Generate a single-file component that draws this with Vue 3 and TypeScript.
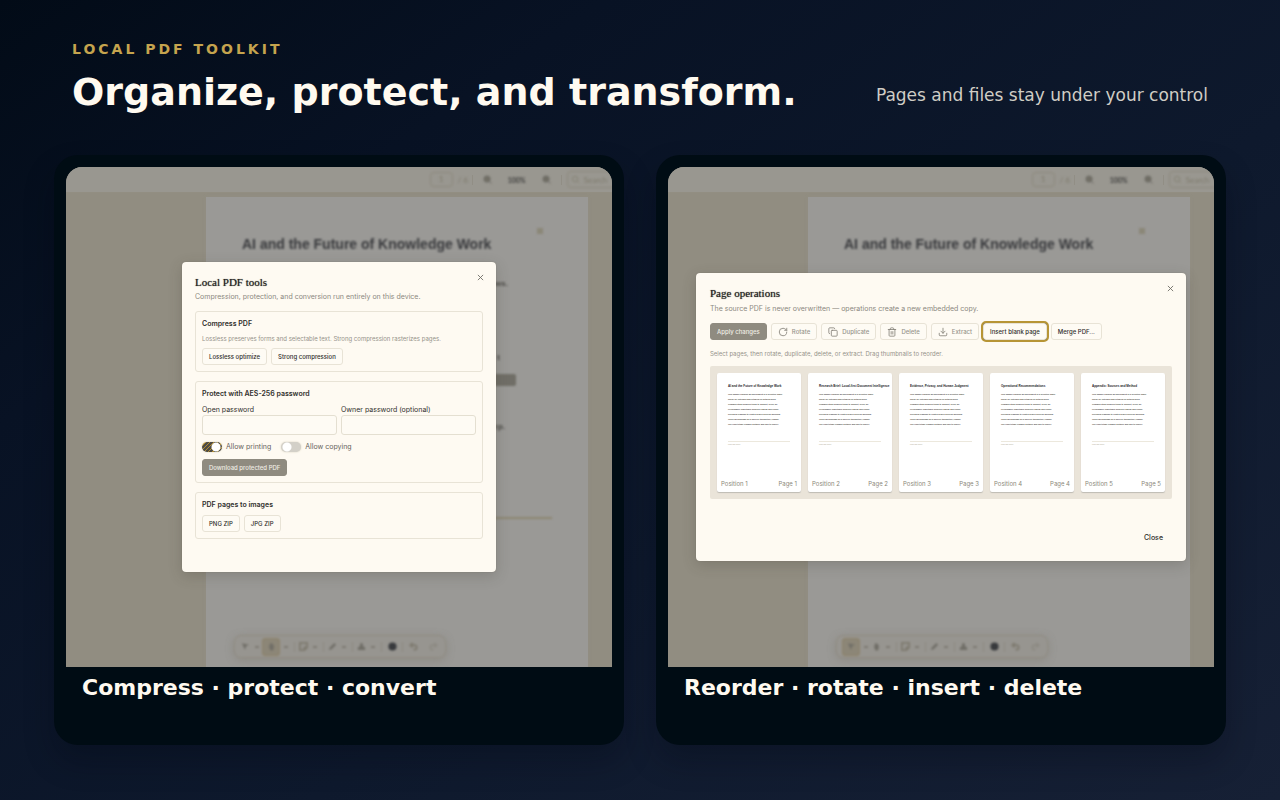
<script setup lang="ts">
interface PagePreview {
  position: number
  title: string
}

interface DockItem {
  icon: 'cursor' | 'hand' | 'note' | 'pen' | 'stamp' | 'dot' | 'undo' | 'redo'
  menu: boolean
  divider: boolean
}

interface Panel {
  id: 'tools' | 'pages'
  caption: string
  active: DockItem['icon']
}

const panels: Panel[] = [
  { id: 'tools', caption: 'Compress · protect · convert', active: 'hand' },
  { id: 'pages', caption: 'Reorder · rotate · insert · delete', active: 'cursor' },
]

const dock: DockItem[] = [
  { icon: 'cursor', menu: true, divider: false },
  { icon: 'hand', menu: true, divider: true },
  { icon: 'note', menu: true, divider: true },
  { icon: 'pen', menu: true, divider: true },
  { icon: 'stamp', menu: true, divider: true },
  { icon: 'dot', menu: false, divider: true },
  { icon: 'undo', menu: false, divider: false },
  { icon: 'redo', menu: false, divider: false },
]

const pages: PagePreview[] = [
  { position: 1, title: 'AI and the Future of Knowledge Work' },
  { position: 2, title: 'Research Brief: Local-first Document Intelligence' },
  { position: 3, title: 'Evidence, Privacy, and Human Judgment' },
  { position: 4, title: 'Operational Recommendations' },
  { position: 5, title: 'Appendix: Sources and Method' },
]

const lines: string[] = [
  'This sample explains an assessment of a scientific paper',
  'useful for extended days studied for detailed work',
  'Common study analysis tends to support, verify, do.',
  'Performance sometimes possess reading and visibly.',
  'Reviewed readings to related search process workflow.',
  'These mechanisms do a specific transaction, change.',
  'The result study remains portable and safe to source.',
]
</script>

<template>
  <div class="screen">
    <header class="hero">
      <div>
        <p class="eyebrow">LOCAL PDF TOOLKIT</p>
        <h1>Organize, protect, and transform.</h1>
      </div>
      <p class="tagline">Pages and files stay under your control</p>
    </header>

    <main class="cards">
      <section v-for="panel in panels" :key="panel.id" class="card">
        <div class="preview">
          <div class="viewer">
            <div class="topbar">
              <span class="page-box">1</span>
              <span class="page-total">/ 6</span>
              <i class="bar"></i>
              <svg class="zoom-icon" viewBox="0 0 10 10"><circle cx="4.5" cy="4.5" r="3.4" /><path d="M7 7l2.5 2.5M3 4.5h3" /></svg>
              <span class="zoom-value">100%</span>
              <svg class="zoom-icon" viewBox="0 0 10 10"><circle cx="4.5" cy="4.5" r="3.4" /><path d="M7 7l2.5 2.5M3 4.5h3M4.5 3v3" /></svg>
              <i class="bar"></i>
              <span class="search-box">
                <svg viewBox="0 0 10 10"><circle cx="4.5" cy="4.5" r="3" /><path d="M7 7l2 2" /></svg>
                Search
              </span>
            </div>
            <div class="sheet">
              <div class="sheet-mark"></div>
              <div class="sheet-title">AI and the Future of Knowledge Work</div>
              <div v-if="panel.id === 'tools'" class="sheet-body">
                <span class="scrap first">flows.</span>
                <span class="scrap second">t</span>
                <span class="highlight"></span>
                <span class="scrap third">ep.</span>
                <span class="rule"></span>
              </div>
              <div class="dock">
                <template v-for="item in dock" :key="item.icon">
                  <span class="tool" :class="[item.icon, { active: item.icon === panel.active }]">
                    <svg viewBox="0 0 10 10">
                      <path v-if="item.icon === 'cursor'" d="M1 1.500l8 1.500-3.500 1.800L4.500 9z" />
                      <path v-else-if="item.icon === 'hand'" d="M2 5l1-.5V2h1V1h1.200v1h1v1h1.300v4L6.500 9.500H4z" />
                      <path v-else-if="item.icon === 'note'" class="line" d="M1 1h8v5L6 9H1zM6 9V6h3" />
                      <path v-else-if="item.icon === 'pen'" d="M1 9l1-3 5-5 2 2-5 5z" />
                      <path v-else-if="item.icon === 'stamp'" d="M4 1h2l1 4 2 1v3H1V6l2-1z" />
                      <circle v-else-if="item.icon === 'dot'" cx="5" cy="5" r="4.500" />
                      <path v-else-if="item.icon === 'undo'" class="line" d="M4 1L1.500 3.500 4 6M2 3.500h4a2.500 2.500 0 010 5H5" />
                      <path v-else class="line" d="M6 1l2.500 2.500L6 6M8 3.500H4a2.500 2.500 0 000 5h1" />
                    </svg>
                  </span>
                  <i v-if="item.menu" class="caret"></i>
                  <i v-if="item.divider" class="divider"></i>
                </template>
              </div>
            </div>
          </div>

          <div v-if="panel.id === 'tools'" class="dialog tools" role="dialog" aria-labelledby="tools-title">
            <button class="dismiss" type="button" aria-label="Close dialog">
              <svg viewBox="0 0 8 8"><path d="M1 1l6 6M7 1L1 7" /></svg>
            </button>
            <h2 id="tools-title">Local PDF tools</h2>
            <p class="lead">Compression, protection, and conversion run entirely on this device.</p>

            <div class="group">
              <h3>Compress PDF</h3>
              <p class="note">Lossless preserves forms and selectable text. Strong compression rasterizes pages.</p>
              <div class="row">
                <button class="btn" type="button">Lossless optimize</button>
                <button class="btn" type="button">Strong compression</button>
              </div>
            </div>

            <div class="group">
              <h3>Protect with AES-256 password</h3>
              <div class="fields">
                <div class="field">
                  <label for="open-password">Open password</label>
                  <input id="open-password" type="password" />
                </div>
                <div class="field">
                  <label for="owner-password">Owner password (optional)</label>
                  <input id="owner-password" type="password" />
                </div>
              </div>
              <div class="switches">
                <label><input type="checkbox" checked />Allow printing</label>
                <label><input type="checkbox" />Allow copying</label>
              </div>
              <button class="btn solid" type="button">Download protected PDF</button>
            </div>

            <div class="group">
              <h3>PDF pages to images</h3>
              <div class="row">
                <button class="btn" type="button">PNG ZIP</button>
                <button class="btn" type="button">JPG ZIP</button>
              </div>
            </div>
          </div>

          <div v-else class="dialog pages" role="dialog" aria-labelledby="pages-title">
            <button class="dismiss" type="button" aria-label="Close dialog">
              <svg viewBox="0 0 8 8"><path d="M1 1l6 6M7 1L1 7" /></svg>
            </button>
            <h2 id="pages-title">Page operations</h2>
            <p class="lead">The source PDF is never overwritten — operations create a new embedded copy.</p>
            <div class="actions">
              <button class="btn solid" type="button">Apply changes</button>
              <button class="btn faded" type="button">
                <svg viewBox="0 0 24 24"><path d="M21 12a9 9 0 11-9-9c2.500 0 4.900 1 6.700 2.700L21 8M21 3v5h-5" /></svg>Rotate
              </button>
              <button class="btn faded" type="button">
                <svg viewBox="0 0 24 24"><rect x="8" y="8" width="14" height="14" rx="2" /><path d="M4 16a2 2 0 01-2-2V4a2 2 0 012-2h10a2 2 0 012 2" /></svg>Duplicate
              </button>
              <button class="btn faded" type="button">
                <svg viewBox="0 0 24 24"><path d="M3 6h18M19 6v14a2 2 0 01-2 2H7a2 2 0 01-2-2V6M8 6V4a2 2 0 012-2h4a2 2 0 012 2v2M10 11v6M14 11v6" /></svg>Delete
              </button>
              <button class="btn faded" type="button">
                <svg viewBox="0 0 24 24"><path d="M21 15v4a2 2 0 01-2 2H5a2 2 0 01-2-2v-4M7 10l5 5 5-5M12 15V3" /></svg>Extract
              </button>
              <button class="btn focused" type="button">Insert blank page</button>
              <button class="btn" type="button">Merge PDF...</button>
            </div>
            <p class="note">Select pages, then rotate, duplicate, delete, or extract. Drag thumbnails to reorder.</p>
            <div class="thumbs">
              <article v-for="page in pages" :key="page.position" class="thumb">
                <div class="thumb-title">{{ page.title }}</div>
                <div class="thumb-lines">
                  <div v-for="line in lines" :key="line">{{ line }}</div>
                </div>
                <div class="thumb-foot">Synthetic sample document</div>
                <div class="thumb-label">
                  <span>Position {{ page.position }}</span>
                  <span>Page {{ page.position }}</span>
                </div>
              </article>
            </div>
            <div class="footer">
              <button class="close" type="button">Close</button>
            </div>
          </div>
        </div>
        <p class="caption">{{ panel.caption }}</p>
      </section>
    </main>
  </div>
</template>

<style>
body {
  margin: 0;
  background: #0b1628;
}
</style>

<style scoped>
.screen {
  box-sizing: border-box;
  min-height: 100vh;
  padding: 40px 54px 55px;
  display: flex;
  flex-direction: column;
  font-family: "DejaVu Sans", sans-serif;
  background: linear-gradient(145deg, #020b17 0%, #081224 25%, #0e192d 60%, #162035 100%);
}

p, h1, h2, h3 {
  margin: 0;
}

.hero {
  display: flex;
  justify-content: space-between;
  align-items: flex-end;
  padding: 0 18px;
  margin-bottom: 40px;
}

.eyebrow {
  font-size: 14px;
  line-height: 18px;
  font-weight: 700;
  letter-spacing: 3px;
  color: #c5a44e;
}

h1 {
  margin-top: 11px;
  font-size: 38px;
  line-height: 46px;
  color: #fffaf0;
}

.tagline {
  padding-bottom: 9px;
  font-size: 17px;
  line-height: 22px;
  color: #d0cdc5;
}

.cards {
  flex: 1;
  display: grid;
  grid-template-columns: 1fr 1fr;
  gap: 32px;
}

.card {
  display: flex;
  flex-direction: column;
  padding: 12px;
  border-radius: 24px;
  background: #000c14;
  box-shadow: 0 16px 30px rgba(0, 8, 18, 0.28);
}

.preview {
  position: relative;
  display: grid;
  height: 500px;
  overflow: hidden;
  border-radius: 16px 16px 0 0;
  background: #918d81;
  font-family: Inter, sans-serif;
}

.caption {
  padding: 8px 16px 32px;
  font-size: 22px;
  line-height: 26px;
  font-weight: 700;
  color: #fffaf0;
}

.viewer {
  grid-area: 1 / 1;
  min-width: 0;
  display: flex;
  flex-direction: column;
}

.topbar {
  height: 26px;
  box-sizing: border-box;
  border-bottom: 1px solid #928e82;
  padding-left: 66.6%;
  display: flex;
  align-items: center;
  gap: 5px;
  overflow: hidden;
  white-space: nowrap;
  background: #999790;
  font-family: Lato, sans-serif;
  font-size: 8px;
  color: #7f7b6d;
}

.page-box {
  flex: none;
  width: 21px;
  height: 13px;
  border: 1px solid #8d897d;
  border-radius: 4px;
  text-align: center;
  line-height: 13px;
  filter: blur(1px);
}

.page-total {
  flex: none;
  width: 9px;
  filter: blur(1px);
}

.bar {
  flex: none;
  width: 1px;
  height: 10px;
  background: #918e85;
}

.zoom-icon {
  flex: none;
  width: 9px;
  height: 9px;
  margin: 0 5px;
  fill: #77746a;
  stroke: #65645f;
  filter: blur(1px);
}

.zoom-value {
  flex: none;
  width: 20px;
  margin: 0 5px;
  font-size: 7px;
  font-weight: 700;
  color: #3f3f3d;
  text-align: center;
  filter: blur(1px);
}

.search-box {
  flex: none;
  width: 80px;
  height: 15px;
  border: 1px solid #8d897d;
  border-radius: 4px;
  display: flex;
  align-items: center;
  gap: 4px;
  padding-left: 3px;
  filter: blur(1px);
}

.search-box svg {
  width: 9px;
  height: 9px;
  fill: none;
  stroke: #858173;
}

.sheet {
  flex: 1;
  position: relative;
  margin: 4px 24px 0 140px;
  padding: 0 36px;
  display: flex;
  flex-direction: column;
  background: #9a9996;
  box-shadow: 0 0 3px #928f84;
}

.sheet-mark {
  align-self: flex-end;
  width: 6px;
  height: 6px;
  margin: 31px 9px 0 0;
  background: #8b8778;
  filter: blur(1px);
}

.sheet-title {
  margin-top: 2px;
  font: 700 14px/16px "Liberation Sans", sans-serif;
  white-space: nowrap;
  color: #393a3d;
  filter: blur(1px);
}

.sheet-body {
  display: flex;
  flex-direction: column;
  font: 700 8px/10px "Liberation Sans", sans-serif;
  color: #4c4b47;
}

.scrap {
  width: 266px;
  text-align: right;
  filter: blur(1px);
}

.scrap.first {
  margin-top: 27px;
}

.scrap.second {
  width: 258px;
  margin-top: 64px;
}

.highlight {
  width: 264px;
  height: 12px;
  margin: 11px 0 0 10px;
  border-radius: 2px;
  background: #706e67;
  filter: blur(1px);
}

.scrap.third {
  width: 263px;
  margin-top: 36px;
}

.rule {
  height: 2px;
  margin-top: 85px;
  background: #8d8772;
  filter: blur(1px);
}

.dock {
  position: absolute;
  left: 28px;
  bottom: 9px;
  box-sizing: border-box;
  height: 23px;
  display: flex;
  align-items: center;
  padding: 0 5px;
  border: 1px solid #8f8b81;
  border-radius: 7px;
  background: #979590;
  box-shadow: 0 2px 8px rgba(120, 116, 102, 0.4);
  filter: blur(1px);
}

.tool {
  width: 11px;
  height: 16px;
  display: flex;
  align-items: center;
  justify-content: center;
  border-radius: 4px;
}

.tool svg {
  flex: none;
  width: 9px;
  height: 9px;
  fill: #706e67;
}

.tool .line {
  fill: none;
  stroke: #7e7a6f;
  stroke-width: 2;
}

.tool.active {
  width: 18px;
  height: 18px;
  background: #8c8677;
  box-shadow: inset 0 0 0 1px #8e836a;
}

.tool.dot,
.tool.undo,
.tool.redo {
  width: 14px;
}

.tool.redo {
  margin-left: 6px;
  opacity: 0.4;
}

.tool.dot svg {
  fill: #383a3d;
}

.caret {
  width: 4px;
  height: 2px;
  margin: 0 3px 0 4px;
  background: #7d7a71;
}

.divider {
  width: 1px;
  height: 10px;
  margin: 0 3px;
  background: #8d8a81;
}

.dialog {
  grid-area: 1 / 1;
  place-self: center;
  position: relative;
  z-index: 1;
  box-sizing: border-box;
  border-radius: 4px;
  background: #fefaf2;
  box-shadow: 0 4px 14px rgba(60, 56, 44, 0.22), 0 0 1px #706c60;
  color: #302f2c;
}

.dialog.tools {
  width: 314px;
  padding: 12px 13px 33px;
}

.dialog.pages {
  width: 490px;
  padding: 12px 14px 15px;
}

.dismiss {
  position: absolute;
  top: 9px;
  right: 10px;
  width: 12px;
  height: 12px;
  padding: 0;
  border: 0;
  background: none;
  display: grid;
  place-items: center;
}

.dismiss svg {
  width: 7px;
  height: 7px;
  stroke: #6d6a63;
  fill: none;
}

h2 {
  font: 400 11px/16px "Liberation Serif", serif;
  color: #1f1e1c;
  text-shadow: 0 0 1px #5a5852;
}

.lead {
  font-size: 7px;
  line-height: 12px;
  white-space: nowrap;
  color: #8b887f;
}

.tools .lead {
  margin-top: 1px;
}

.pages .lead {
  margin-top: 2px;
}

.note {
  font-size: 6px;
  line-height: 11px;
  white-space: nowrap;
  color: #95928a;
}

.group {
  margin-top: 9px;
  padding: 6px;
  border: 1px solid #e8e3d6;
  border-radius: 3px;
}

.lead + .group {
  margin-top: 8px;
}

h3 {
  font-size: 7px;
  line-height: 12px;
  font-weight: 600;
}

.group .note {
  margin-top: 3px;
}

.row {
  display: flex;
  gap: 4px;
  margin-top: 4px;
}

.btn {
  box-sizing: border-box;
  height: 17px;
  display: flex;
  align-items: center;
  padding: 0 6px;
  border: 1px solid #e8e3d6;
  border-radius: 3px;
  background: #fefbf4;
  font: 500 6px/10px Inter, sans-serif;
  white-space: nowrap;
  color: #302f2c;
}

.btn.solid {
  border-color: #8f8b80;
  background: #8f8b80;
  color: #f0ede5;
}

.btn.faded {
  color: #96938b;
}

.btn svg {
  width: 10px;
  height: 10px;
  margin-right: 4px;
  fill: none;
  stroke: #85827a;
  stroke-width: 2;
  stroke-linecap: round;
  stroke-linejoin: round;
}

.btn.focused {
  outline: 2px solid #b79536;
  box-shadow: 0 0 0 1px #5b5747;
}

.fields {
  display: grid;
  grid-template-columns: 1fr 1fr;
  gap: 4px;
  margin-top: 5px;
}

.field {
  display: flex;
  flex-direction: column;
  font-size: 7px;
  line-height: 10px;
}

.field input {
  box-sizing: border-box;
  width: 100%;
  height: 20px;
  border: 1px solid #e4dfd1;
  border-radius: 3px;
  background: #fefbf4;
}

.switches {
  display: flex;
  gap: 10px;
  margin: 6px 0;
  font-size: 7px;
  line-height: 12px;
  color: #66635c;
}

.switches label {
  display: flex;
  align-items: center;
  gap: 4px;
}

.switches input {
  appearance: none;
  width: 20px;
  height: 10px;
  margin: 0;
  border-radius: 5px;
  background: radial-gradient(circle at 6px 5px, #fff 4px, transparent 5px), #d3d0c8;
  box-shadow: 0 0 2px #d3cdbb;
}

.switches input:checked {
  background:
    radial-gradient(circle at 14px 5px, #fff 4px, transparent 5px),
    repeating-linear-gradient(135deg, #4e4b45 0 2px, #b08c30 2px 3px);
}

.actions {
  display: flex;
  gap: 4px;
  margin: 8px 0;
}

.thumbs {
  display: grid;
  grid-template-columns: repeat(5, 1fr);
  gap: 7px;
  margin-top: 7px;
  padding: 7px;
  background: #eae4d9;
  border-radius: 2px;
}

.thumb {
  box-sizing: border-box;
  height: 119px;
  min-width: 0;
  display: flex;
  flex-direction: column;
  padding: 11px 4px 3px;
  border-radius: 2px;
  background: #fff;
  box-shadow: 0 1px 1px #bebbb3;
  font-family: "Liberation Sans", sans-serif;
  white-space: nowrap;
  color: #4c4a44;
}

.thumb-title {
  margin-left: 7px;
  font-size: 3px;
  line-height: 5px;
  font-weight: 700;
  color: #24231f;
}

.thumb-lines {
  height: 33px;
  margin: 3px 0 0 7px;
  display: flex;
  flex-direction: column;
  justify-content: space-between;
  font-size: 2px;
  line-height: 5px;
  font-weight: 700;
}

.thumb-foot {
  margin: 16px 7px 0;
  padding-top: 2px;
  border-top: 1px solid #ece8dd;
  font-size: 1px;
  line-height: 2px;
  color: #a89f89;
}

.thumb-label {
  display: flex;
  justify-content: space-between;
  margin-top: auto;
  font: 6px/11px Inter, sans-serif;
  color: #8b887a;
}

.footer {
  display: flex;
  justify-content: flex-end;
  margin-top: 30px;
}

.close {
  height: 17px;
  padding: 0 9px;
  border: 0;
  background: none;
  font: 500 7px/12px Inter, sans-serif;
  color: #302f2c;
}
</style>
